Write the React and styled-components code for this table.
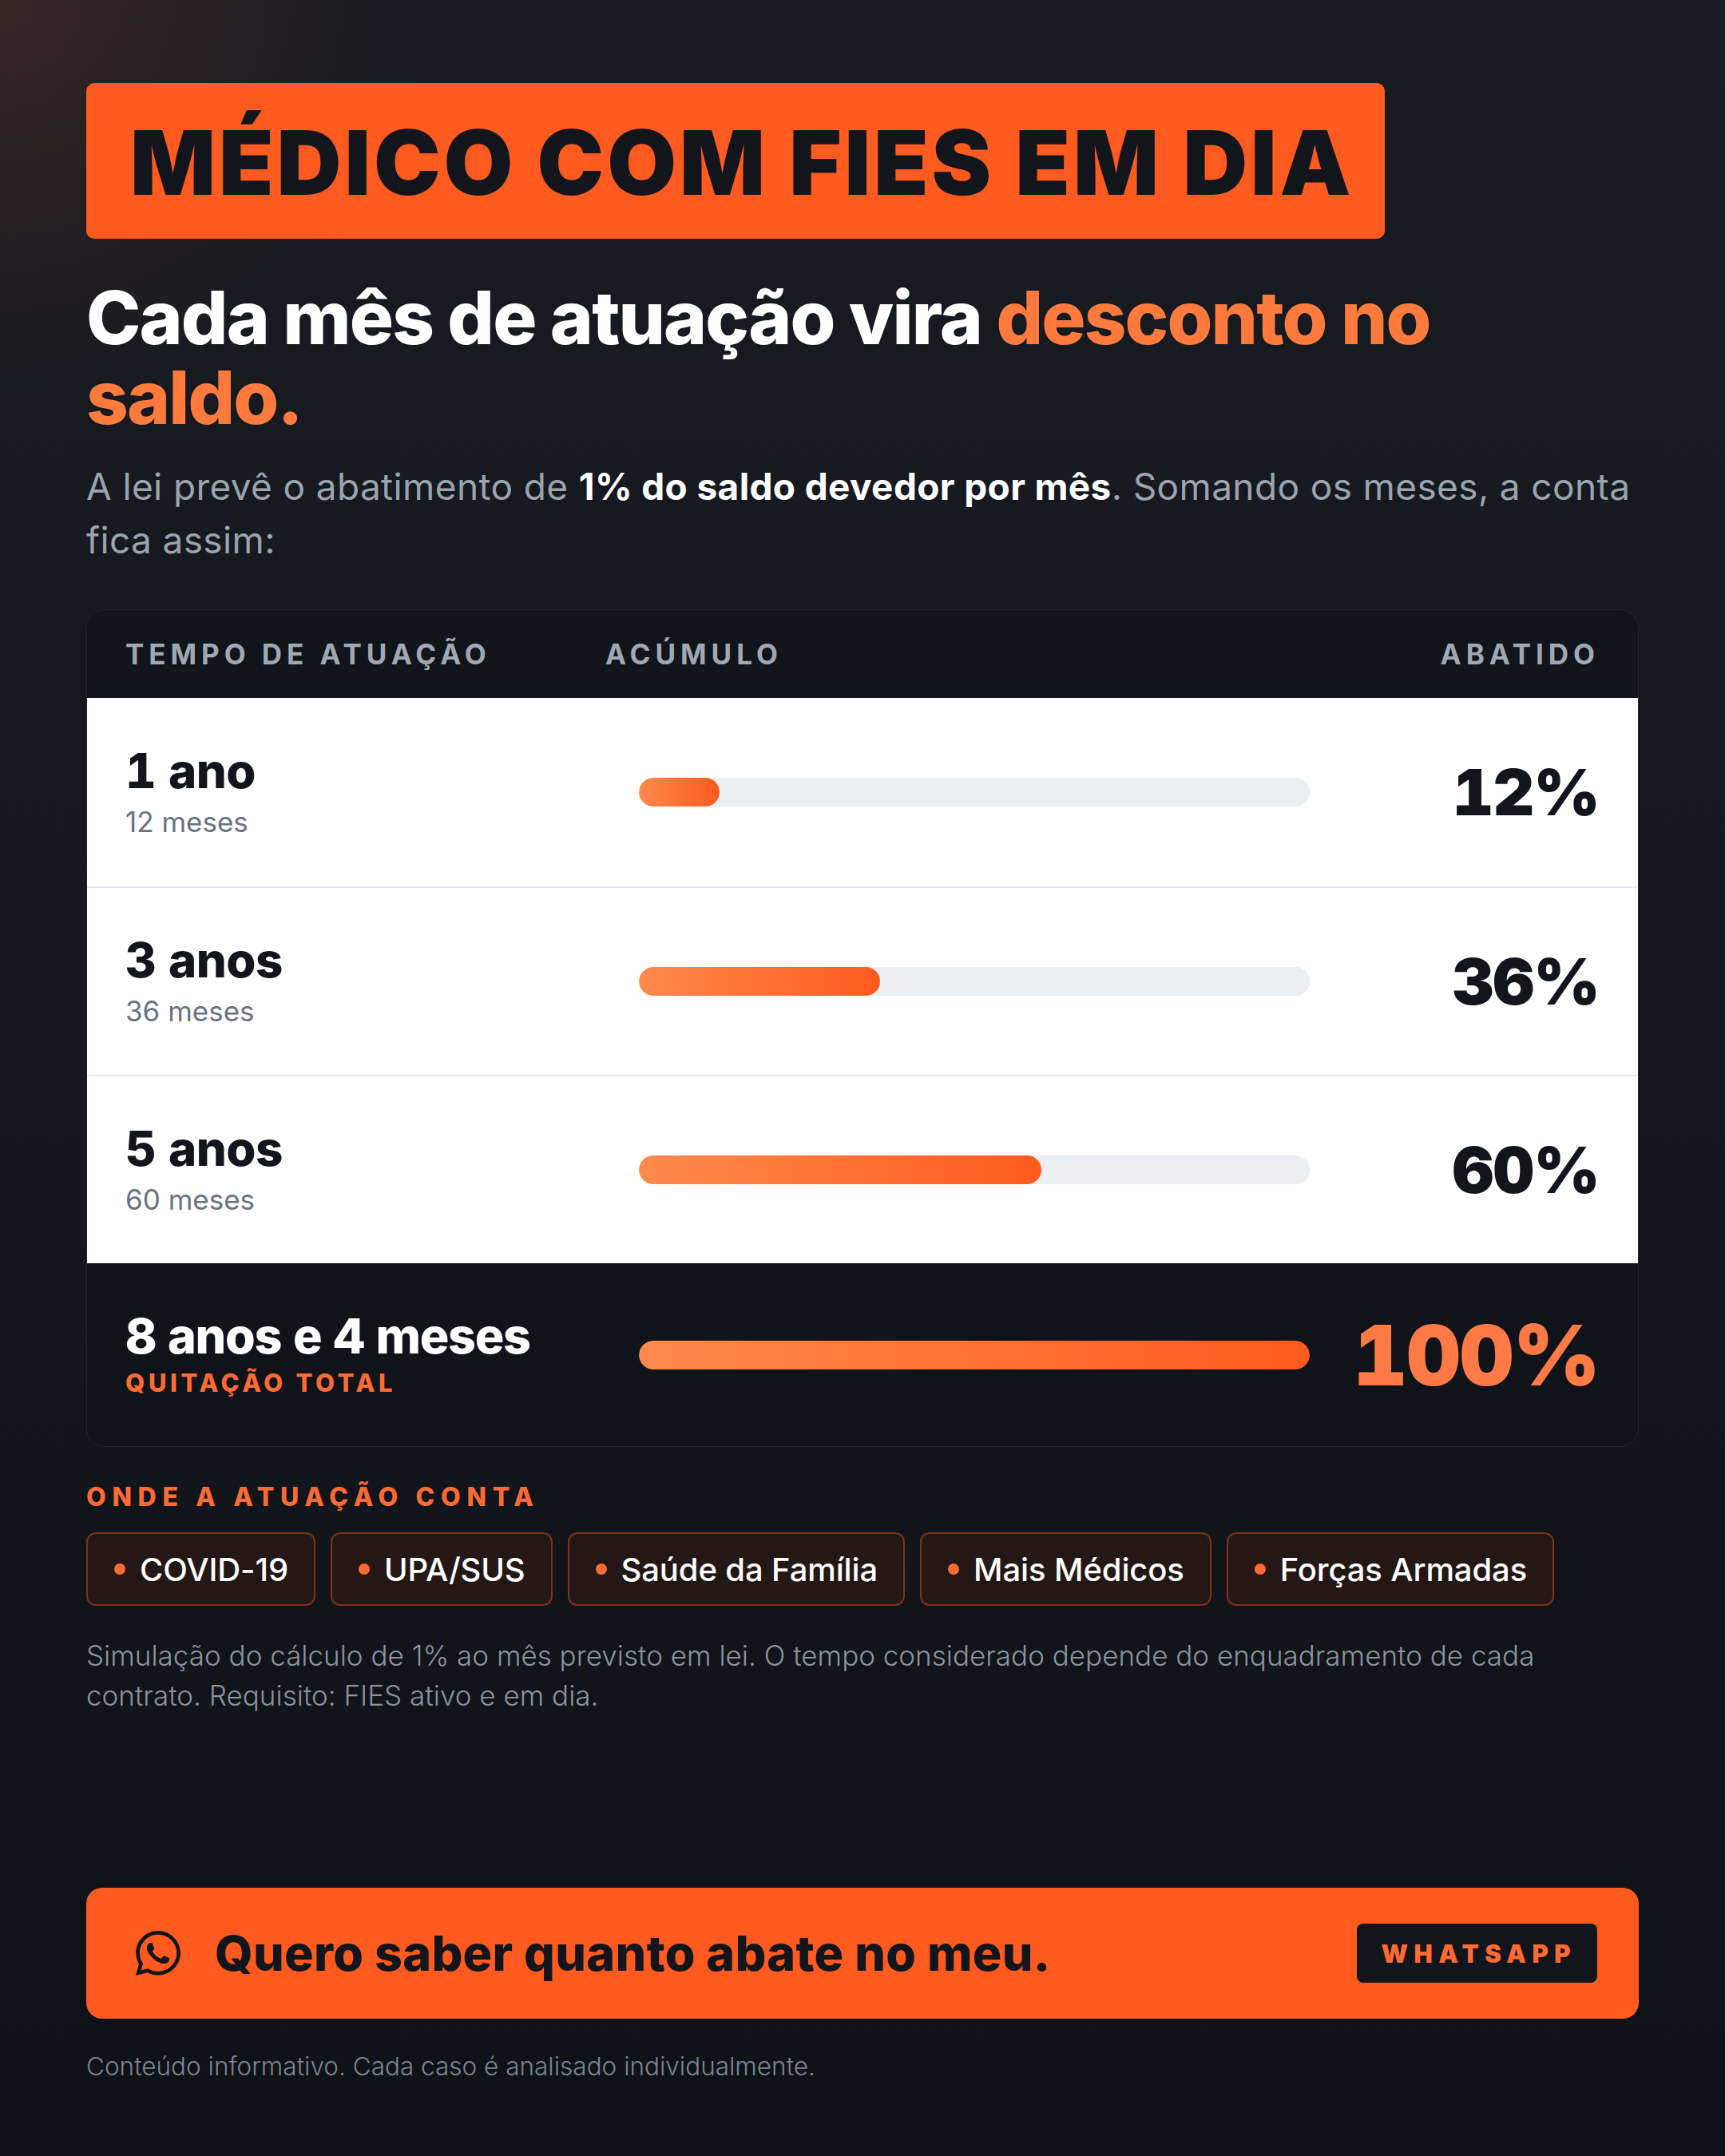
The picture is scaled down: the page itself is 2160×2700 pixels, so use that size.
import React from 'react'
import styled, {createGlobalStyle} from 'styled-components'
import {FaWhatsapp} from 'react-icons/fa'

const rows = [
  {time: '1 ano', months: '12 meses', pct: 12},
  {time: '3 anos', months: '36 meses', pct: 36},
  {time: '5 anos', months: '60 meses', pct: 60},
]

const places = ['COVID-19', 'UPA/SUS', 'Saúde da Família', 'Mais Médicos', 'Forças Armadas']

export default function App() {
  return (
    <Page>
      <GlobalStyle />
      <TitleBadge>
        <Title>MÉDICO COM FIES EM DIA</Title>
      </TitleBadge>
      <Heading>
        Cada mês de atuação vira <Accent>desconto no saldo.</Accent>
      </Heading>
      <Lead>
        A lei prevê o abatimento de <strong>1% do saldo devedor por mês</strong>. Somando os meses, a conta fica assim:
      </Lead>

      <Table>
        <HeadRow>
          <HeadCell>Tempo de atuação</HeadCell>
          <HeadCell>Acúmulo</HeadCell>
          <HeadCell $right={true}>Abatido</HeadCell>
        </HeadRow>
        {rows.map(r => (
          <Row key={r.time}>
            <div>
              <RowTitle>{r.time}</RowTitle>
              <RowSub>{r.months}</RowSub>
            </div>
            <Track>
              <Fill style={{width: r.pct + '%'}} />
            </Track>
            <Pct>{r.pct}%</Pct>
          </Row>
        ))}
        <Row $total={true}>
          <div>
            <RowTitle $total={true}>8 anos e 4 meses</RowTitle>
            <TotalTag>Quitação total</TotalTag>
          </div>
          <Track $total={true}>
            <Fill style={{width: '100%'}} />
          </Track>
          <Pct $total={true}>100%</Pct>
        </Row>
      </Table>

      <SectionLabel>Onde a atuação conta</SectionLabel>
      <Chips>
        {places.map(p => (
          <Chip key={p}>{p}</Chip>
        ))}
      </Chips>
      <Note>
        Simulação do cálculo de 1% ao mês previsto em lei. O tempo considerado depende do enquadramento de cada
        contrato. Requisito: FIES ativo e em dia.
      </Note>

      <Cta>
        <CtaIcon />
        <CtaText>Quero saber quanto abate no meu.</CtaText>
        <CtaButton>WhatsApp</CtaButton>
      </Cta>
      <Footer>Conteúdo informativo. Cada caso é analisado individualmente.</Footer>
    </Page>
  )
}

const GlobalStyle = createGlobalStyle`
  * { box-sizing: border-box; }
  body {
    margin: 0;
    background: #0e1116;
    font-family: Inter, 'Noto Sans', sans-serif;
  }
`

const Page = styled('div')`
  min-height: 2700px;
  display: flex;
  flex-direction: column;
  padding: 104px 108px 90px;
  background:
    radial-gradient(900px circle at 0 0, rgba(255, 110, 60, 0.12), transparent 60%),
    linear-gradient(180deg, #181b21 0%, #14171d 45%, #0e1116 100%);
`

const TitleBadge = styled('div')`
  align-self: flex-start;
  background: #ff5a1f;
  border-radius: 10px;
  padding: 0 42px 0 55px;
  height: 195px;
  display: flex;
  align-items: center;
`

const Title = styled('h1')`
  margin: 0;
  font-size: 112px;
  font-weight: 900;
  letter-spacing: 0.035em;
  line-height: 1.2;
  color: #12151c;
  padding-top: 4px;
  margin-right: -0.035em;
`

const Heading = styled('h2')`
  margin: 49px 0 0;
  max-width: 1820px;
  font-size: 92px;
  line-height: 100px;
  font-weight: 800;
  letter-spacing: -0.02em;
  color: #ffffff;
`

const Accent = styled('span')`
  color: #ff7a3d;
`

const Lead = styled('p')`
  margin: 28px 0 0;
  font-size: 46px;
  line-height: 67px;
  font-weight: 400;
  letter-spacing: 0.008em;
  color: #9aa3ae;

  strong {
    color: #ffffff;
    font-weight: 700;
  }
`

const Table = styled('div')`
  margin-top: 53px;
  border-radius: 24px;
  overflow: hidden;
  border: 1px solid rgba(255, 255, 255, 0.07);
  background: #11141a;
`

const Grid = styled('div')`
  display: grid;
  grid-template-columns: 601px 1fr 363px;
  align-items: center;
  padding: 0 48px 0 48px;
`

const HeadRow = styled(Grid)`
  height: 110px;
  background: #11141a;
`

const HeadCell = styled('div')`
  font-size: 35px;
  font-weight: 700;
  letter-spacing: 0.17em;
  text-transform: uppercase;
  color: #a0a8b3;
  text-align: ${p => (p.$right ? 'right' : 'left')};
`

const Row = styled(Grid)`
  height: ${p => (p.$total ? '229px' : '236px')};
  background: ${p => (p.$total ? '#10131a' : '#ffffff')};
  border-top: ${p => (p.$total ? 'none' : '2px solid #e6e9ed')};

  ${HeadRow} + & {
    border-top: none;
  }
`

const RowTitle = styled('div')`
  font-size: ${p => (p.$total ? '61px' : '60px')};
  line-height: 1.1;
  font-weight: 800;
  letter-spacing: ${p => (p.$total ? '-0.022em' : '-0.008em')};
  font-feature-settings: 'tnum' 1;
  color: ${p => (p.$total ? '#ffffff' : '#12151c')};
`

const RowSub = styled('div')`
  margin-top: 9px;
  font-size: 35px;
  line-height: 1.3;
  font-weight: 400;
  color: #6b7380;
`

const TotalTag = styled('div')`
  margin-top: 5px;
  font-size: 31px;
  line-height: 1.3;
  font-weight: 800;
  letter-spacing: 0.15em;
  text-transform: uppercase;
  color: #ff6b35;
`

const Track = styled('div')`
  margin-left: 42px;
  height: 36px;
  border-radius: 18px;
  background: ${p => (p.$total ? 'transparent' : '#eceff2')};
  overflow: hidden;
`

const Fill = styled('div')`
  height: 100%;
  border-radius: 18px;
  background: linear-gradient(90deg, #ff8a4c 0%, #ff5a1f 100%);
`

const Pct = styled('div')`
  text-align: right;
  font-size: ${p => (p.$total ? '105px' : '80px')};
  line-height: 1;
  font-weight: 900;
  letter-spacing: -0.01em;
  font-variant-numeric: tabular-nums;
  font-feature-settings: 'tnum' 1;
  color: ${p => (p.$total ? '#ff7a45' : '#12151c')};
`

const SectionLabel = styled('div')`
  margin-top: 44px;
  font-size: 32px;
  line-height: 38px;
  font-weight: 800;
  letter-spacing: 0.24em;
  text-transform: uppercase;
  color: #ff6b35;
`

const Chips = styled('div')`
  margin-top: 25px;
  display: flex;
  flex-wrap: wrap;
  gap: 19px;
`

const Chip = styled('div')`
  height: 92px;
  display: flex;
  align-items: center;
  gap: 18px;
  padding: 0 32px 0 33px;
  border: 2px solid #7c3417;
  border-radius: 12px;
  background: #241816;
  color: #ffffff;
  font-size: 40px;
  font-weight: 500;
  letter-spacing: -0.003em;

  &::before {
    content: '';
    width: 14px;
    height: 14px;
    border-radius: 50%;
    background: #ff6b35;
  }
`

const Note = styled('p')`
  margin: 37px 0 0;
  max-width: 1880px;
  font-size: 35px;
  line-height: 50px;
  font-weight: 300;
  color: #8b939f;
`

const Cta = styled('div')`
  margin-top: auto;
  height: 164px;
  display: flex;
  align-items: center;
  padding: 0 52px 0 58px;
  border-radius: 20px;
  background: #ff5a1f;
`

const CtaIcon = styled(FaWhatsapp)`
  width: 64px;
  height: 64px;
  color: #12151c;
  flex-shrink: 0;
`

const CtaText = styled('div')`
  margin-left: 39px;
  flex: 1;
  font-size: 61px;
  font-weight: 800;
  letter-spacing: 0.005em;
  color: #12151c;
`

const CtaButton = styled('div')`
  height: 74px;
  display: flex;
  align-items: center;
  padding: 0 26px 0 31px;
  border-radius: 8px;
  background: #12151b;
  color: #ff6b35;
  font-size: 31px;
  font-weight: 900;
  letter-spacing: 0.24em;
  text-transform: uppercase;
`

const Footer = styled('div')`
  margin-top: 37px;
  font-size: 31.5px;
  line-height: 45px;
  font-weight: 300;
  color: #7c8591;
`
